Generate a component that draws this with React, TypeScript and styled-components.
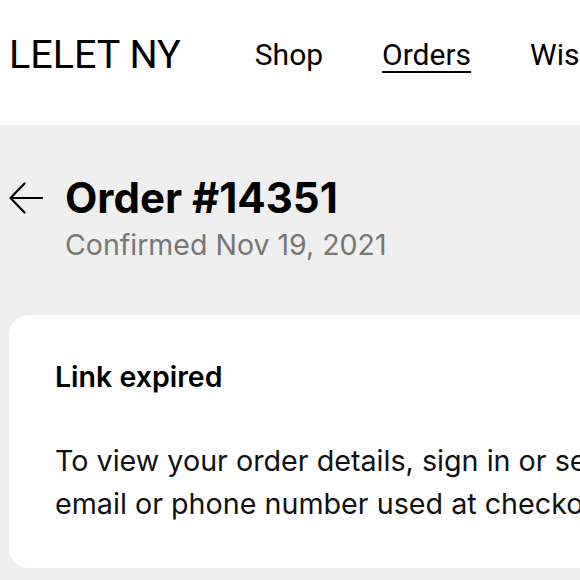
import React from "react";
import styled, { createGlobalStyle } from "styled-components";

const Global = createGlobalStyle`
  html, body { margin: 0; padding: 0; overflow: hidden; background: #efefef; }
  body { width: 580px; height: 580px; }
  #root { width: 1000px; }
`;

const Page = styled.div`
  width: 1000px;
  min-height: 580px;
  background: #efefef;
  font-family: Inter, "Noto Sans", sans-serif;
  color: #000;
`;

const Header = styled.header`
  height: 125px;
  background: #fff;
  display: flex;
  align-items: center;
  padding: 0 0 17px 9px;
  box-sizing: border-box;
  font-family: Roboto, "Liberation Sans", sans-serif;
`;

const Logo = styled.div`
  font-size: 39.5px;
  font-weight: 400;
  margin-right: 74px;
`;

const Nav = styled.nav`
  display: flex;
  gap: 59px;
`;

const NavLink = styled.a<{ $active?: boolean }>`
  font-size: 30px;
  color: #000;
  text-decoration: ${(p) => (p.$active ? "underline" : "none")};
  text-underline-offset: 6px;
  text-decoration-thickness: 2px;
`;

const Main = styled.main`
  padding: 46px 0 0 9px;
`;

const TitleRow = styled.div`
  display: flex;
  align-items: flex-start;
  gap: 22px;
`;

const Back = styled.svg`
  width: 34px;
  height: 34px;
  margin-top: 9.5px;
  flex: none;
`;

const Titles = styled.div`
  display: flex;
  flex-direction: column;
`;

const Title = styled.h1`
  margin: 0;
  font-size: 42px;
  font-weight: 700;
  line-height: 54px;
`;

const Sub = styled.div`
  margin-top: 3px;
  font-size: 28.5px;
  line-height: 34px;
  color: #777;
`;

const Card = styled.section`
  margin-top: 53px;
  background: #fff;
  border-radius: 20px;
  padding: 42px 0 0 46px;
  height: 253px;
  box-sizing: border-box;
`;

const CardTitle = styled.h2`
  margin: 0 0 42px;
  font-size: 28.5px;
  font-weight: 600;
  line-height: 40px;
`;

const CardText = styled.p`
  margin: 0;
  font-size: 28.7px;
  line-height: 43px;
  color: #111;
  width: 940px;
`;

export default function App() {
  return (
    <Page>
      <Global />
      <Header>
        <Logo>LELET NY</Logo>
        <Nav>
          <NavLink>Shop</NavLink>
          <NavLink $active>Orders</NavLink>
          <NavLink>Wishlist</NavLink>
        </Nav>
      </Header>
      <Main>
        <TitleRow>
          <Back viewBox="0 0 34 34" fill="none" stroke="#000" strokeWidth="2.2" strokeLinecap="round" strokeLinejoin="round">
            <path d="M33 17H1.5M15.5 2.5L1.5 17l14 14.5" />
          </Back>
          <Titles>
            <Title>Order #14351</Title>
            <Sub>Confirmed Nov 19, 2021</Sub>
          </Titles>
        </TitleRow>
        <Card>
          <CardTitle>Link expired</CardTitle>
          <CardText>
            To view your order details, sign in or send a link to the
            <br />
            email or phone number used at checkout.
          </CardText>
        </Card>
      </Main>
    </Page>
  );
}
